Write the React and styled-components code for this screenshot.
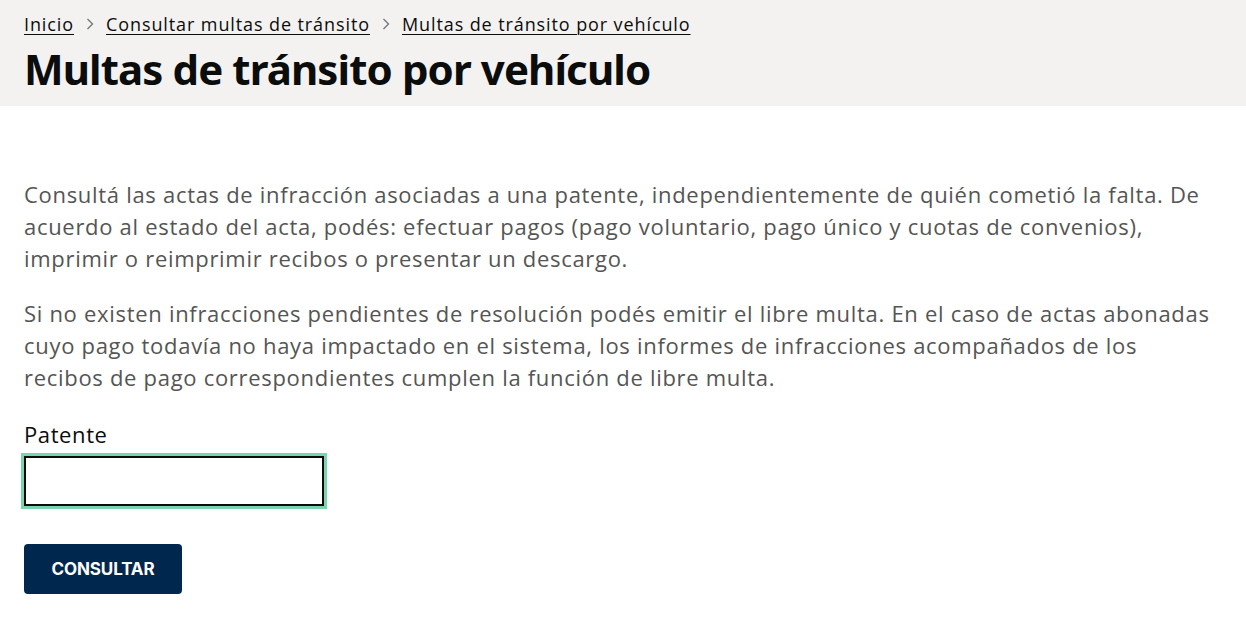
import React from 'react'
import styled, { createGlobalStyle } from 'styled-components'

const GlobalStyle = createGlobalStyle`
  body {
    margin: 0;
    background: #fff;
    font-family: "Open Sans", "Noto Sans", sans-serif;
  }
`

const Header = styled.header`
  background: #f3f2f1;
  padding: 11px 24px 12px;
  height: 106px;
  box-sizing: border-box;
`

const Crumbs = styled.nav`
  display: flex;
  align-items: center;
  gap: 10px;
  font-family: "Open Sans", "Noto Sans", sans-serif;
  font-size: 18px;
  line-height: 26px;
  letter-spacing: 0.9px;
`

const Crumb = styled.a`
  color: #0b0c0c;
  text-decoration: underline;
  text-underline-offset: 3px;
  text-decoration-thickness: 1px;
`

const Sep = styled.span`
  display: flex;
  width: 12px;
  justify-content: center;
`

const Title = styled.h1`
  margin: 6px 0 0;
  font-family: "Noto Sans", sans-serif;
  font-weight: 700;
  font-size: 42px;
  line-height: 52px;
  letter-spacing: -0.9px;
  color: #0b0c0c;
`

const Main = styled.main`
  padding: 72px 24px 24px;
`

const Text = styled.p`
  margin: 0 0 23px;
  font-size: 22px;
  line-height: 32px;
  color: #555555;
  letter-spacing: 0.7px;
`

const Field = styled.div`
  display: flex;
  flex-direction: column;
  margin-top: 26px;
`

const Label = styled.label`
  font-size: 22px;
  line-height: 30px;
  color: #0b0c0c;
  letter-spacing: 0.6px;
  margin-bottom: 7px;
`

const Input = styled.input`
  width: 300px;
  height: 50px;
  box-sizing: border-box;
  border: 2px solid #0b0c0c;
  outline: 3px solid #7bd3b0;
  font-size: 20px;
  padding: 0 10px;
`

const Button = styled.button`
  margin-top: 38px;
  width: 158px;
  height: 50px;
  border: none;
  border-radius: 4px;
  background: #00284f;
  color: #fff;
  font-family: "Inter", "Roboto", sans-serif;
  font-weight: 700;
  font-size: 17px;
  letter-spacing: -0.1px;
  cursor: pointer;
`

const Chevron = () => (
  <svg width="8" height="12" viewBox="0 0 8 12">
    <path d="M1.5 1 L6.5 6 L1.5 11" fill="none" stroke="#6f777b" strokeWidth="1.3" />
  </svg>
)

export default function App() {
  return (
    <>
      <GlobalStyle />
      <Header>
        <Crumbs>
          <Crumb href="#">Inicio</Crumb>
          <Sep><Chevron /></Sep>
          <Crumb href="#">Consultar multas de tránsito</Crumb>
          <Sep><Chevron /></Sep>
          <Crumb href="#">Multas de tránsito por vehículo</Crumb>
        </Crumbs>
        <Title>Multas de tránsito por vehículo</Title>
      </Header>
      <Main>
        <Text>
          Consultá las actas de infracción asociadas a una patente, independientemente de quién cometió la falta. De
          acuerdo al estado del acta, podés: efectuar pagos (pago voluntario, pago único y cuotas de convenios),
          imprimir o reimprimir recibos o presentar un descargo.
        </Text>
        <Text>
          Si no existen infracciones pendientes de resolución podés emitir el libre multa. En el caso de actas abonadas
          cuyo pago todavía no haya impactado en el sistema, los informes de infracciones acompañados de los
          recibos de pago correspondientes cumplen la función de libre multa.
        </Text>
        <Field>
          <Label htmlFor="patente">Patente</Label>
          <Input id="patente" type="text" />
        </Field>
        <Button>CONSULTAR</Button>
      </Main>
    </>
  )
}
